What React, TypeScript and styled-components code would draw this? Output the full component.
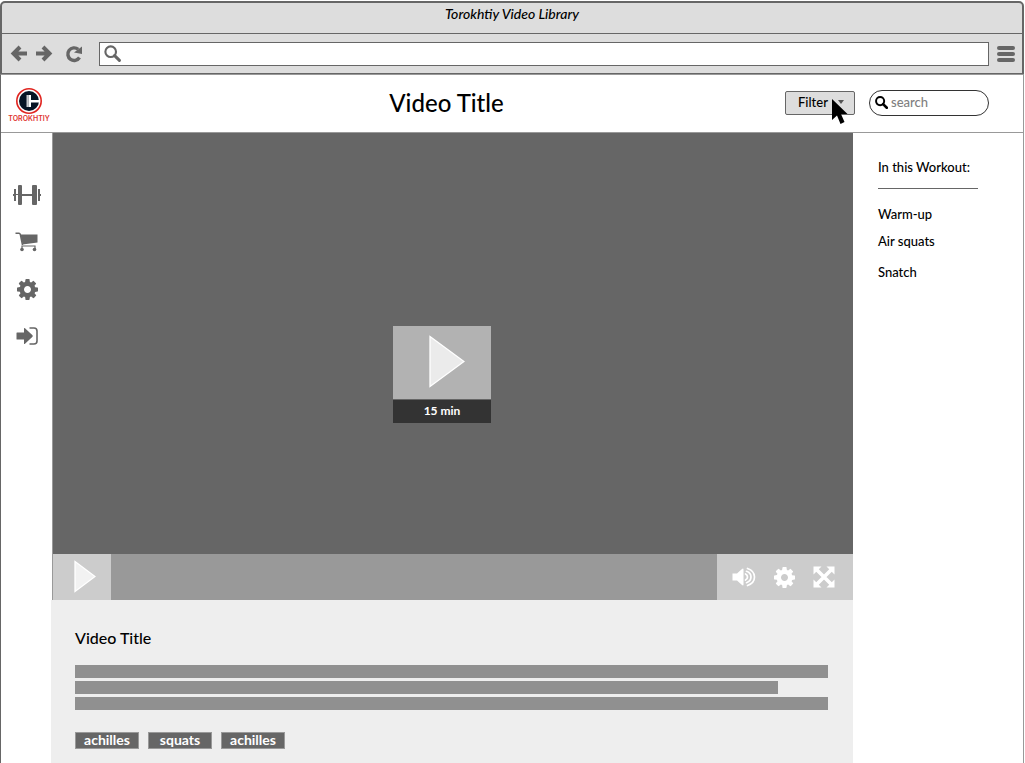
import React from "react";
import styled, { createGlobalStyle } from "styled-components";

const GlobalStyle = createGlobalStyle`
  *, *::before, *::after { box-sizing: border-box; }
  body {
    margin: 0;
    background: #fff;
    color: #000;
    font-family: Lato, "Open Sans", sans-serif;
    font-size: 13px;
    font-weight: 500;
  }
  button, input { font: inherit; color: inherit; }
  h1, h2, ul { margin: 0; padding: 0; font-weight: 500; }
  svg { display: block; flex: none; }
`;

const Window = styled.div`
  display: flex;
  flex-direction: column;
  min-height: 100vh;
  padding: 1px 1px 0 0;
`;

const Chrome = styled.div`
  border: 2px solid #666;
  border-bottom-width: 1px;
  border-radius: 5px 5px 0 0;
  background: #ddd;
  color: #666;
`;

const TitleBar = styled.div`
  height: 31px;
  padding-top: 2px;
  border-bottom: 1px solid #666;
  color: #000;
  font-size: 14px;
  font-style: italic;
  line-height: 18px;
  text-align: center;
`;

const Toolbar = styled.div`
  display: flex;
  align-items: center;
  height: 39px;
  padding: 0 7px 0 8px;
`;

const IconButton = styled.button`
  display: flex;
  align-items: center;
  justify-content: center;
  padding: 0;
  border: 0;
  background: none;
  color: inherit;
`;

const History = styled.div`
  display: flex;
  gap: 7px;
  margin-right: 12px;
`;

const AddressBar = styled.label`
  display: flex;
  flex: 1;
  align-items: center;
  height: 24px;
  margin: 0 8px 0 16px;
  padding: 0 4px;
  border: 1px solid #666;
  background: #fff;
`;

const PlainInput = styled.input`
  flex: 1;
  min-width: 0;
  padding: 0;
  border: 0;
  outline: 0;
  background: none;
  &::placeholder { color: #808080; opacity: 1; }
`;

const Page = styled.div`
  display: flex;
  flex: 1;
  flex-direction: column;
  border: 1px solid #999;
  border-left-color: #666;
  border-bottom: 0;
`;

const Header = styled.header`
  display: flex;
  align-items: center;
  height: 58px;
  padding: 0 34px 2px 7px;
  border-bottom: 1px solid #999;
`;

const Brand = styled.a`
  display: flex;
  flex-direction: column;
  align-items: center;
  gap: 1px;
  width: 42px;
  padding-top: 6px;
  color: #e0342f;
  font-family: Inter, sans-serif;
  font-size: 7px;
  font-weight: 600;
  line-height: 8px;
  text-decoration: none;
`;

const PageTitle = styled.h1`
  flex: 1;
  padding: 0 0 0 58px;
  font-size: 24px;
  line-height: 30px;
  text-align: center;
`;

const FilterButton = styled.button`
  position: relative;
  display: flex;
  align-items: center;
  justify-content: space-between;
  width: 70px;
  height: 24px;
  margin-right: 14px;
  padding: 0 10px 1px 12px;
  border: 1px solid #666;
  border-radius: 2px;
  background: #ddd;
`;

const Cursor = styled.svg`
  position: absolute;
  top: 6px;
  left: 45px;
`;

const SearchBox = styled.label`
  display: flex;
  align-items: center;
  gap: 3px;
  width: 120px;
  height: 26px;
  padding: 0 8px 1px 5px;
  border: 1px solid #333;
  border-radius: 13px;
`;

const Body = styled.div`
  display: flex;
  flex: 1;
`;

const SideNav = styled.nav`
  display: flex;
  flex-direction: column;
  align-items: center;
  gap: 19px;
  width: 50px;
  padding: 48px 0 0 2px;
  color: #666;
`;

const NavLink = styled.a`
  display: flex;
  align-items: center;
  justify-content: center;
  width: 28px;
  height: 28px;
  color: inherit;
`;

const Main = styled.main`
  display: flex;
  flex: 1;
  flex-direction: column;
  min-width: 0;
`;

const Player = styled.section`
  margin-left: 1px;
  border-left: 1px solid #999;
`;

const Screen = styled.div`
  display: flex;
  align-items: center;
  justify-content: center;
  aspect-ratio: 800 / 421;
  padding: 62px 22px 0 0;
  background: #666;
`;

const Thumbnail = styled.button`
  display: flex;
  flex-direction: column;
  gap: 1px;
  width: 98px;
  padding: 0;
  border: 0;
  background: none;
  color: #fff;
  font-size: 12px;
  font-weight: 700;
`;

const ThumbnailArt = styled.span`
  display: flex;
  align-items: center;
  justify-content: center;
  height: 73px;
  padding: 0 0 2px 10px;
  background: #b2b2b2;
`;

const Duration = styled.span`
  height: 23px;
  background: #333;
  line-height: 22px;
`;

const Controls = styled.div`
  display: flex;
  height: 46px;
  background: #999;
  color: #fff;
`;

const PlayButton = styled(IconButton)`
  width: 58px;
  padding: 0 0 1px 6px;
  background: #ccc;
`;

const ControlGroup = styled.div`
  display: flex;
  align-items: center;
  gap: 16px;
  margin-left: auto;
  padding: 0 17px 0 15px;
  background: #ccc;
`;

const ControlButton = styled(IconButton)`
  width: 24px;
  height: 24px;
`;

const Details = styled.section`
  flex: 1;
  padding: 28px 25px 14px 24px;
  background: #eee;
`;

const DetailsTitle = styled.h2`
  font-size: 16px;
  line-height: 20px;
`;

const Description = styled.div`
  display: grid;
  gap: 3px;
  margin: 17px 0 22px;
`;

const TextLine = styled.div<{ $short?: boolean }>`
  width: ${({ $short }) => ($short ? "93.4%" : "100%")};
  height: 13px;
  background: #909090;
`;

const Tags = styled.ul`
  display: flex;
  gap: 9px;
  list-style: none;
`;

const Tag = styled.li`
  width: 64px;
  height: 17px;
  border: 1px solid #999;
  background: #666;
  color: #fff;
  font-size: 14px;
  font-weight: 700;
  line-height: 14px;
  text-align: center;
`;

const Aside = styled.aside`
  width: 170px;
  padding: 24px 25px 0;
`;

const AsideTitle = styled.h2`
  width: 100px;
  padding-bottom: 11px;
  border-bottom: 1px solid #666;
  font-size: 13px;
  line-height: 20px;
  white-space: nowrap;
`;

const Exercises = styled.ul`
  padding-top: 15px;
  line-height: 20px;
  list-style: none;
`;

const Exercise = styled.li<{ $main?: boolean }>`
  padding-top: ${({ $main }) => ($main ? "11px" : "7px")};
  &:first-child { padding-top: 0; }
`;

const ExerciseLink = styled.a`
  color: inherit;
  text-decoration: none;
`;

const Arrow = ({ flip }: { flip?: boolean }) => (
  <svg width="18" height="18" viewBox="0 0 18 18" fill="none" stroke="currentColor" strokeWidth="4">
    <path d={flip ? "M1 8.500H14M8 2L14.500 8.500 8 15" : "M17 8.500H4M10 2L3.500 8.500 10 15"} />
  </svg>
);

const Reload = () => (
  <svg width="18" height="18" viewBox="0 0 18 18">
    <path d="M14.500 12.500A6.300 6.300 0 1 1 13.200 4.300" fill="none" stroke="currentColor" strokeWidth="3.400" />
    <path d="M17 1.500V9L9 7.500Z" fill="currentColor" />
  </svg>
);

const Search = ({ size, weight }: { size: number; weight: number }) => (
  <svg width={size} height={size} viewBox="0 0 16 16" fill="none" stroke="currentColor">
    <circle cx="6.300" cy="6.300" r="5" strokeWidth={weight} />
    <path d="M10 10L14.500 14.500" strokeWidth={weight + 0.8} strokeLinecap="round" />
  </svg>
);

const Menu = () => (
  <svg width="18" height="16" viewBox="0 0 18 16" fill="currentColor">
    <rect width="18" height="4" rx="2" />
    <rect y="6" width="18" height="4" rx="2" />
    <rect y="12" width="18" height="4" rx="2" />
  </svg>
);

const Emblem = () => (
  <svg width="26" height="26" viewBox="0 0 26 26">
    <circle cx="13" cy="13" r="12.200" fill="#fff" stroke="#e0241f" strokeWidth="1.600" />
    <circle cx="13" cy="13" r="10" fill="#071525" />
    <path d="M14.500 12H24V14.500H14.500Z" fill="#fff" />
    <path d="M10.500 7H12.500V19H10.500Z" fill="#c8cace" />
    <path d="M12.500 7H15V19H12.500Z" fill="#fff" />
  </svg>
);

const Dumbbell = () => (
  <svg width="28" height="20" viewBox="0 0 28 20" fill="currentColor">
    <rect y="9" width="28" height="2" />
    <rect x="1" y="4" width="2" height="12" />
    <rect x="25" y="4" width="2" height="12" />
    <path d="M3 7H5V13H3ZM24 7H25V13H24Z" fill="#fff" />
    <rect x="5" width="4" height="20" rx="1" />
    <rect x="19" width="5" height="20" rx="1" />
    <rect x="3" y="9" width="2" height="1" />
  </svg>
);

const Cart = () => (
  <svg width="24" height="20" viewBox="0 0 24 20" fill="currentColor">
    <path d="M.5 1.300H4Q5 1.300 5.300 2.400L7.500 13" fill="none" stroke="currentColor" strokeWidth="1.500" />
    <path d="M5.500 2.500H22.500V10.500L7.500 12.500Z" />
    <path d="M7 17V14H20V17" fill="none" stroke="currentColor" strokeWidth="1.200" />
    <circle cx="7" cy="17.500" r="1.800" />
    <circle cx="19.500" cy="17.500" r="1.800" />
  </svg>
);

const Cog = () => (
  <svg width="21" height="21" viewBox="0 0 1536 1536" fill="currentColor">
    <path d="M1024 768q0-106-75-181t-181-75-181 75-75 181 75 181 181 75 181-75 75-181zm512-109v222q0 12-8 23t-20 13l-185 28q-19 54-39 91 35 50 107 138 10 12 10 25t-9 23q-27 37-99 108t-94 71q-12 0-26-9l-138-108q-44 23-91 38-16 136-29 186-7 28-36 28h-222q-14 0-24.500-8.500t-11.500-21.500l-28-184q-49-16-90-37l-141 107q-10 9-25 9-14 0-25-11-126-114-165-168-7-10-7-23 0-12 8-23 15-21 51-66.500t54-70.500q-27-50-41-99l-183-27q-13-2-21-12.500t-8-23.500v-222q0-12 8-23t19-13l186-28q14-46 39-92-40-57-107-138-10-12-10-24 0-10 9-23 26-36 98.500-107.500t94.500-71.500q13 0 26 10l138 107q44-23 91-38 16-136 29-186 7-28 36-28h222q14 0 24.500 8.500t11.500 21.500l28 184q49 16 90 37l142-107q9-9 24-9 13 0 25 10 129 119 165 170 7 8 7 22 0 12-8 23-15 21-51 66.500t-54 70.500q26 50 41 98l183 28q13 2 21 12.500t8 23.500z" />
  </svg>
);

const SignIn = () => (
  <svg width="22" height="18" viewBox="0 0 22 18">
    <path d="M1 5.500H8V1.500Q8 .5 9 1.300L16.500 8.300Q17 9 16.500 9.700L9 16.700Q8 17.500 8 16.500V12.500H1Q.5 12.500 .5 12V6Q.5 5.500 1 5.500Z" fill="currentColor" />
    <path d="M13.500 1H18Q21 1 21 4V14Q21 17 18 17H13.500" fill="none" stroke="currentColor" strokeWidth="1.600" />
  </svg>
);

const Volume = () => (
  <svg width="24" height="20" viewBox="0 0 24 20" fill="none" stroke="currentColor">
    <path d="M.5 6.500H5L10 2Q11.500 1 11.500 2.500V17.500Q11.500 19 10 18L5 13.500H.5Z" fill="currentColor" stroke="none" />
    <path d="M13.500 7Q15.500 8 15.500 10T13.500 13M14.500 4.300Q19 6 19 10T14.500 15.700M15.500 1.500Q22.500 4 22.500 10T15.500 18.500" strokeWidth="1.700" strokeLinecap="round" />
  </svg>
);

const Expand = () => (
  <svg width="22" height="22" viewBox="0 0 22 22">
    <path d="M4 4L18 18M18 4L4 18" stroke="currentColor" strokeWidth="3.600" />
    <path d="M.5 .5H8.500L.5 8.500ZM21.500 .5V8.500L13.500 .5ZM.5 21.500V13.500L8.500 21.500ZM21.500 21.500H13.500L21.500 13.500Z" fill="currentColor" />
  </svg>
);

const Play = ({ width, height, fill }: { width: number; height: number; fill: string }) => (
  <svg width={width} height={height} viewBox={`0 0 ${width} ${height}`}>
    <path d={`M1 1.500L${width - 1} ${height / 2}L1 ${height - 1.5}Z`} fill={fill} stroke="#fff" strokeWidth="1.300" />
  </svg>
);

const navItems = [
  { label: "Workouts", icon: <Dumbbell /> },
  { label: "Shop", icon: <Cart /> },
  { label: "Settings", icon: <Cog /> },
  { label: "Sign in", icon: <SignIn /> },
];

const exercises = [
  { name: "Warm-up" },
  { name: "Air squats" },
  { name: "Snatch", main: true },
];
const tags = ["achilles", "squats", "achilles"];

export default function App() {
  return (
    <>
      <GlobalStyle />
      <Window>
        <Chrome>
          <TitleBar>Torokhtiy Video Library</TitleBar>
          <Toolbar>
            <History>
              <IconButton aria-label="Back"><Arrow /></IconButton>
              <IconButton aria-label="Forward"><Arrow flip /></IconButton>
            </History>
            <IconButton aria-label="Reload"><Reload /></IconButton>
            <AddressBar>
              <Search size={17} weight={2} />
              <PlainInput type="text" aria-label="Address" />
            </AddressBar>
            <IconButton aria-label="Menu"><Menu /></IconButton>
          </Toolbar>
        </Chrome>
        <Page>
          <Header>
            <Brand href="#">
              <Emblem />
              TOROKHTIY
            </Brand>
            <PageTitle>Video Title</PageTitle>
            <FilterButton>
              Filter
              <svg width="6" height="4" viewBox="0 0 6 4"><path d="M0 0H6L3 4Z" fill="#555" /></svg>
              <Cursor width="18" height="28" viewBox="0 0 18 28" aria-hidden="true">
                <path d="M1 1V22L6 17.500L9.500 26L13.500 24L10 16H16.500Z" />
              </Cursor>
            </FilterButton>
            <SearchBox>
              <Search size={13} weight={2.4} />
              <PlainInput type="search" placeholder="search" aria-label="Search" />
            </SearchBox>
          </Header>
          <Body>
            <SideNav>
              {navItems.map(({ label, icon }) => (
                <NavLink key={label} href="#" aria-label={label}>{icon}</NavLink>
              ))}
            </SideNav>
            <Main>
              <Player>
                <Screen>
                  <Thumbnail>
                    <ThumbnailArt><Play width={36} height={53} fill="#ebebeb" /></ThumbnailArt>
                    <Duration>15 min</Duration>
                  </Thumbnail>
                </Screen>
                <Controls>
                  <PlayButton aria-label="Play"><Play width={22} height={33} fill="#f2f2f2" /></PlayButton>
                  <ControlGroup>
                    <ControlButton aria-label="Volume"><Volume /></ControlButton>
                    <ControlButton aria-label="Playback settings"><Cog /></ControlButton>
                    <ControlButton aria-label="Full screen"><Expand /></ControlButton>
                  </ControlGroup>
                </Controls>
              </Player>
              <Details>
                <DetailsTitle>Video Title</DetailsTitle>
                <Description>
                  <TextLine />
                  <TextLine $short />
                  <TextLine />
                </Description>
                <Tags>
                  {tags.map((tag, i) => <Tag key={i}>{tag}</Tag>)}
                </Tags>
              </Details>
            </Main>
            <Aside>
              <AsideTitle>In this Workout:</AsideTitle>
              <Exercises>
                {exercises.map(({ name, main }) => (
                  <Exercise key={name} $main={main}>
                    <ExerciseLink href="#">{name}</ExerciseLink>
                  </Exercise>
                ))}
              </Exercises>
            </Aside>
          </Body>
        </Page>
      </Window>
    </>
  );
}
